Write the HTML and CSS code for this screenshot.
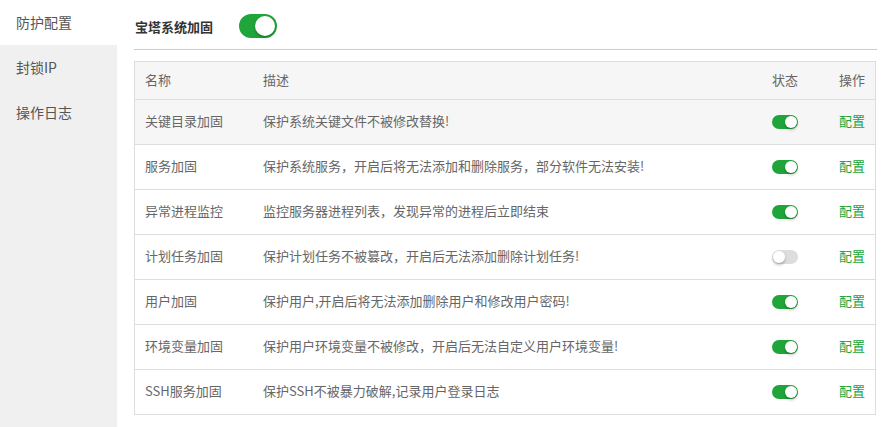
FILE: index.html
```html
<!DOCTYPE html>
<html lang="zh-CN">
<head>
  <meta charset="UTF-8" />
  <meta name="viewport" content="width=device-width, initial-scale=1.0" />
  <title>系统加固</title>
  <link rel="stylesheet" href="styles.css">
</head>
<body>

  <div class="side-menu">
    <div class="menu-item active">防护配置</div>
    <div class="menu-item">封锁IP</div>
    <div class="menu-item">操作日志</div>
  </div>

  <div class="main">
    <div class="head-bar">
      <span class="head-title">宝塔系统加固</span>
      <span class="switch big on"></span>
    </div>

    <table class="rules">
      <thead>
        <tr>
          <th class="c-name">名称</th>
          <th class="c-desc">描述</th>
          <th class="c-state">状态</th>
          <th class="c-op">操作</th>
        </tr>
      </thead>
      <tbody>
        <tr class="hover">
          <td>关键目录加固</td>
          <td>保护系统关键文件不被修改替换!</td>
          <td><span class="switch on"></span></td>
          <td><a class="cfg">配置</a></td>
        </tr>
        <tr>
          <td>服务加固</td>
          <td>保护系统服务，开启后将无法添加和删除服务，部分软件无法安装!</td>
          <td><span class="switch on"></span></td>
          <td><a class="cfg">配置</a></td>
        </tr>
        <tr>
          <td>异常进程监控</td>
          <td>监控服务器进程列表，发现异常的进程后立即结束</td>
          <td><span class="switch on"></span></td>
          <td><a class="cfg">配置</a></td>
        </tr>
        <tr>
          <td>计划任务加固</td>
          <td>保护计划任务不被篡改，开启后无法添加删除计划任务!</td>
          <td><span class="switch"></span></td>
          <td><a class="cfg">配置</a></td>
        </tr>
        <tr>
          <td>用户加固</td>
          <td>保护用户,开启后将无法添加删除用户和修改用户密码!</td>
          <td><span class="switch on"></span></td>
          <td><a class="cfg">配置</a></td>
        </tr>
        <tr>
          <td>环境变量加固</td>
          <td>保护用户环境变量不被修改，开启后无法自定义用户环境变量!</td>
          <td><span class="switch on"></span></td>
          <td><a class="cfg">配置</a></td>
        </tr>
        <tr>
          <td>SSH服务加固</td>
          <td>保护SSH不被暴力破解,记录用户登录日志</td>
          <td><span class="switch on"></span></td>
          <td><a class="cfg">配置</a></td>
        </tr>
      </tbody>
    </table>
  </div>

</body>
</html>
```

FILE: styles.css
```css
body {
  margin: 0;
  font-family: "Noto Sans CJK SC", "Noto Sans", sans-serif;
  font-size: 13px;
  color: #666;
  background: #fff;
  display: flex;
  height: 427px;
  overflow: hidden;
}
.side-menu {
  width: 117px;
  flex-shrink: 0;
  background-color: #f0f0f0;
}
.menu-item {
  height: 45px;
  line-height: 44px;
  padding-left: 16px;
  font-size: 14px;
  color: #555;
}
.menu-item.active {
  background-color: #fff;
}
.main {
  width: 743px;
  padding-left: 17px;
}
.head-bar {
  display: flex;
  align-items: center;
  height: 24px;
  padding: 14px 0 11px 1px;
  border-bottom: 1px solid #ccc;
}
.head-title {
  font-weight: bold;
  color: #333;
  margin-right: 26px;
}
.rules {
  margin-top: 11px;
  width: 742px;
  border-collapse: collapse;
  border: 1px solid #ddd;
  table-layout: fixed;
}
.rules th,
.rules td {
  text-align: left;
  padding: 0 10px 3px;
  font-weight: normal;
  white-space: nowrap;
}
.rules th {
  height: 34px;
  background-color: #f6f6f6;
  border-bottom: 1px solid #ddd;
}
.rules td {
  height: 41px;
  border-bottom: 1px solid #ddd;
}
.rules tr.hover td {
  background-color: #f6f6f6;
}
.c-name { width: 98px; }
.c-desc { width: 489px; }
.c-state { width: 47px; }
.c-op { width: 26px; }
.cfg {
  color: #20a53a;
  cursor: pointer;
}
.switch {
  position: relative;
  display: inline-block;
  vertical-align: middle;
  width: 26px;
  height: 14px;
  border-radius: 7px;
  background-color: #ddd;
}
.switch::after {
  content: "";
  position: absolute;
  top: 1px;
  left: 1px;
  width: 12px;
  height: 12px;
  border-radius: 50%;
  background: #fff;
  box-shadow: 0 2px 3px rgba(0, 0, 0, 0.25);
}
.switch.on {
  background-color: #20a53a;
}
.switch.on::after {
  left: 13px;
}
.switch.big {
  width: 38px;
  height: 24px;
  border-radius: 12px;
}
.switch.big::after {
  width: 20px;
  height: 20px;
  top: 2px;
  left: 2px;
}
.switch.big.on::after {
  left: 16px;
}
```
